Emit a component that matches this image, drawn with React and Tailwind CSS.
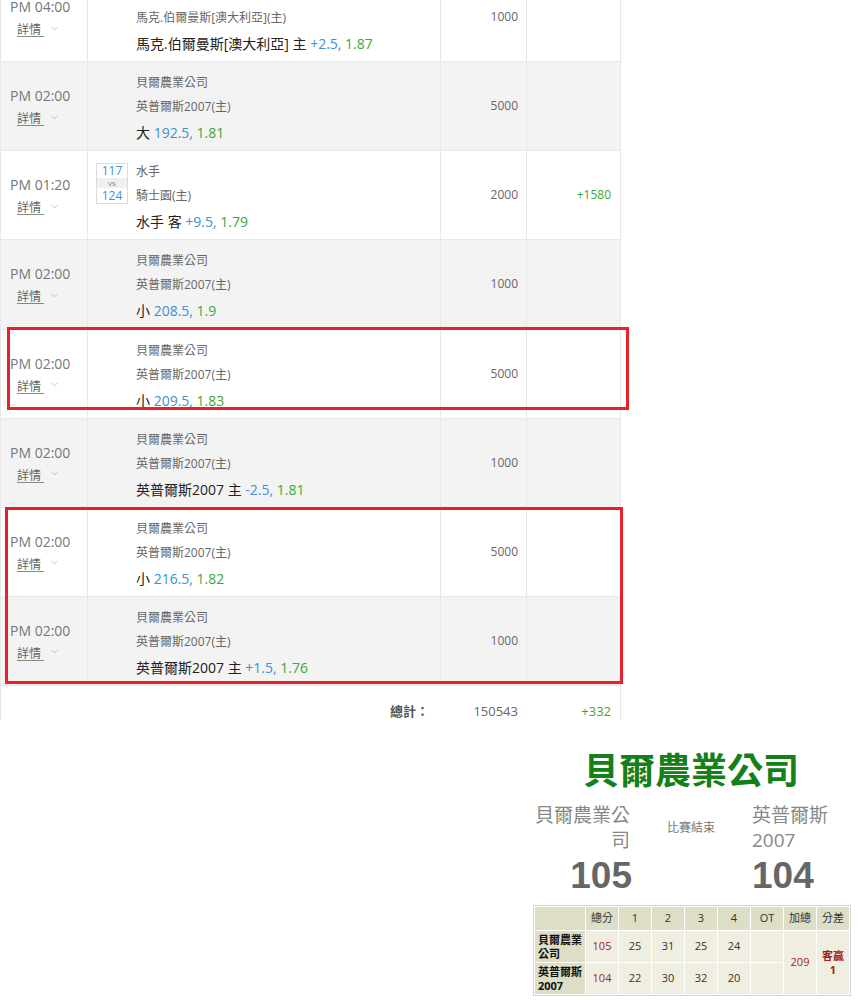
import { ChevronDown } from 'lucide-react';

const rows = [
  {
    time: 'PM 04:00',
    teams: ['珀斯野貓[澳大利亞]', '馬克.伯爾曼斯[澳大利亞](主)'],
    pick: '馬克.伯爾曼斯[澳大利亞] 主',
    line: '+2.5,',
    odds: '1.87',
    amount: '1000',
  },
  { time: 'PM 02:00', teams: ['貝爾農業公司', '英普爾斯2007(主)'], pick: '大', line: '192.5,', odds: '1.81', amount: '5000' },
  {
    time: 'PM 01:20',
    teams: ['水手', '騎士園(主)'],
    pick: '水手 客',
    line: '+9.5,',
    odds: '1.79',
    amount: '2000',
    win: '+1580',
    score: ['117', '124'],
  },
  { time: 'PM 02:00', teams: ['貝爾農業公司', '英普爾斯2007(主)'], pick: '小', line: '208.5,', odds: '1.9', amount: '1000' },
  { time: 'PM 02:00', teams: ['貝爾農業公司', '英普爾斯2007(主)'], pick: '小', line: '209.5,', odds: '1.83', amount: '5000' },
  { time: 'PM 02:00', teams: ['貝爾農業公司', '英普爾斯2007(主)'], pick: '英普爾斯2007 主', line: '-2.5,', odds: '1.81', amount: '1000' },
  { time: 'PM 02:00', teams: ['貝爾農業公司', '英普爾斯2007(主)'], pick: '小', line: '216.5,', odds: '1.82', amount: '5000' },
  { time: 'PM 02:00', teams: ['貝爾農業公司', '英普爾斯2007(主)'], pick: '英普爾斯2007 主', line: '+1.5,', odds: '1.76', amount: '1000' },
];

function BetRow({ row, shaded }) {
  return (
    <div
      className={`grid grid-cols-[87px_353px_86px_94px] h-[89.15px] border-b border-[#e8e8e8] ${
        shaded ? 'bg-[#f3f3f3]' : 'bg-white'
      }`}
    >
      {/* time */}
      <div className="border-r border-[#e8e8e8] pt-[24px]">
        <div className="pl-[9px] text-[14px] leading-[20px] text-[#777]">{row.time}</div>
        <div className="mt-[5px] pl-[16px] flex items-center text-[12px] leading-[16px] text-[#666]">
          <span className="underline underline-offset-2 decoration-[#888]">詳情&nbsp;</span>
          <ChevronDown className="ml-[5px] -mt-[4px] h-[11px] w-[11px] text-[#aaa]" strokeWidth={1.5} />
        </div>
      </div>

      {/* match */}
      <div className="flex border-r border-[#e8e8e8]">
        <div className="w-[48px] shrink-0 pl-[8px] pt-[12px]">
          {row.score && (
            <div className="w-[32px] border border-[#dcdcdc] bg-white text-center text-[12px] text-[#3d8fd6]">
              <div className="leading-[14px]">{row.score[0]}</div>
              <div className="h-[10px] bg-[#f0f0f0] text-[8px] leading-[10px] text-[#888]">vs</div>
              <div className="leading-[15px]">{row.score[1]}</div>
            </div>
          )}
        </div>
        <div className="pt-[13px]">
          <div className="text-[12px] leading-[16px] text-[#666] whitespace-nowrap">{row.teams[0]}</div>
          <div className="mt-[8px] text-[12px] leading-[16px] text-[#666] whitespace-nowrap">{row.teams[1]}</div>
          <div className="mt-[8px] text-[14px] leading-[20px] whitespace-nowrap">
            <span className="text-[#222]">{row.pick} </span>
            <span className="text-[#3d8fd6]">{row.line} </span>
            <span className="text-[#3aa83a]">{row.odds}</span>
          </div>
        </div>
      </div>

      {/* amount */}
      <div className="flex items-center justify-end pr-[8px] border-r border-[#e8e8e8] text-[12px] text-[#666]">
        {row.amount}
      </div>

      {/* result */}
      <div className="flex items-center justify-end pr-[9px] border-r border-[#e8e8e8] text-[12px] text-[#3aa83a]">
        {row.win}
      </div>
    </div>
  );
}

function ScoreBoard() {
  const head = ['總分', '1', '2', '3', '4', 'OT', '加總', '分差'];
  return (
    <div className="w-[316px] mr-[11px]">
      <div className="text-center text-[36px] leading-[40px] font-bold text-[#13801a]">貝爾農業公司</div>

      <div className="mt-[12px] grid grid-cols-[97px_122px_97px]">
        <div className="text-right text-[19px] leading-[25px] text-[#888]">貝爾農業公司</div>
        <div className="flex items-center justify-center text-[12px] text-[#777]">比賽結束</div>
        <div className="text-left text-[19px] leading-[25px] text-[#888]">英普爾斯2007</div>
      </div>

      <div className="mt-[2px] grid grid-cols-[99px_120px_97px] font-['Liberation_Sans',sans-serif] font-bold text-[37px] leading-[42px] text-[#666]">
        <div className="text-right">105</div>
        <div />
        <div className="text-left">104</div>
      </div>

      <table className="mt-[8px] w-[314px] border border-[#d4d4d4] border-separate border-spacing-[1px] bg-white text-[11px] text-[#333] table-fixed">
        <colgroup>
          <col className="w-[50px]" />
          {head.map((h) => (
            <col key={h} className="w-[32px]" />
          ))}
        </colgroup>
        <thead>
          <tr className="h-[23px]">
            <th className="bg-[#deddc5]" />
            {head.map((h) => (
              <th key={h} className="bg-[#deddc5] font-normal text-center">
                {h}
              </th>
            ))}
          </tr>
        </thead>
        <tbody>
          <tr className="h-[31px]">
            <td className="bg-[#deddc5] pl-[3px] font-bold leading-[14px] text-[#111]">貝爾農業公司</td>
            <td className="bg-[#efeee0] text-center text-[#a41d1d]">105</td>
            <td className="bg-[#efeee0] text-center">25</td>
            <td className="bg-[#efeee0] text-center">31</td>
            <td className="bg-[#efeee0] text-center">25</td>
            <td className="bg-[#efeee0] text-center">24</td>
            <td className="bg-[#efeee0]" />
            <td rowSpan={2} className="bg-[#efeee0] text-center text-[#a41d1d]">209</td>
            <td rowSpan={2} className="bg-[#efeee0] text-center leading-[14px] font-bold text-[#a41d1d]">
              客贏
              <br />1
            </td>
          </tr>
          <tr className="h-[31px]">
            <td className="bg-[#deddc5] pl-[3px] font-bold leading-[14px] text-[#111]">英普爾斯2007</td>
            <td className="bg-[#efeee0] text-center text-[#a41d1d]">104</td>
            <td className="bg-[#efeee0] text-center">22</td>
            <td className="bg-[#efeee0] text-center">30</td>
            <td className="bg-[#efeee0] text-center">32</td>
            <td className="bg-[#efeee0] text-center">20</td>
            <td className="bg-[#efeee0]" />
          </tr>
        </tbody>
      </table>
    </div>
  );
}

export default function App() {
  return (
    <div className="relative w-[860px] h-[1000px] overflow-hidden bg-white font-['Open_Sans','Noto_Sans_CJK_TC',sans-serif]">
      {/* bet list */}
      <div className="-mt-[27px] w-[621px] border-l border-[#e8e8e8]">
        {rows.map((row, i) => (
          <BetRow key={i} row={row} shaded={i % 2 === 1} />
        ))}
        {/* total */}
        <div className="grid grid-cols-[87px_353px_86px_94px] h-[34px] pt-[17px] text-[13px] leading-[16px]">
          <div />
          <div className="text-right pr-[12px] font-semibold text-[#555]">總計：</div>
          <div className="text-right pr-[9px] text-[#666]">150543</div>
          <div className="text-right pr-[9px] text-[#3aa83a] border-r border-[#e8e8e8] -mt-[17px] pt-[17px]">+332</div>
        </div>
      </div>

      <div className="flex justify-end mt-[31px]">
        <ScoreBoard />
      </div>

      {/* highlight marks */}
      <div className="absolute left-[7px] top-[327px] w-[622px] h-[83px] border-[3px] border-[#e8202a]" />
      <div className="absolute left-[5px] top-[507px] w-[618px] h-[177px] border-[3px] border-[#e8202a]" />
    </div>
  );
}
